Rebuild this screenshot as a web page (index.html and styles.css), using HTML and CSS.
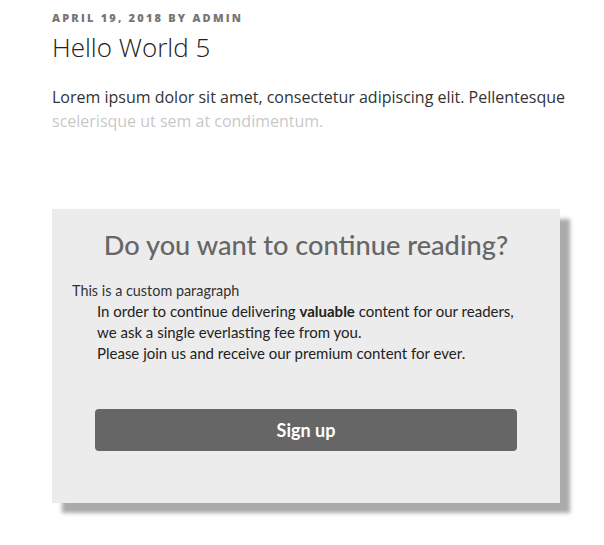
FILE: index.html
```html
<!DOCTYPE html>
<html>
<head>
<meta charset="utf-8">
<link rel="stylesheet" href="styles.css">
</head>
<body>
<main class="post">
  <div class="meta">April 19, 2018 by admin</div>
  <h1 class="title">Hello World 5</h1>
  <div class="excerpt">
    <p>Lorem ipsum dolor sit amet, consectetur adipiscing elit. Pellentesque scelerisque ut sem at condimentum.</p>
  </div>
  <section class="paywall">
    <h2 class="paywall-title">Do you want to continue reading?</h2>
    <div class="paywall-text">
      <p class="lead">This is a custom paragraph</p>
      <p class="indent">In order to continue delivering <strong>valuable</strong> content for our readers,<br>we ask a single everlasting fee from you.<br>Please join us and receive our premium content for ever.</p>
    </div>
    <div class="actions">
      <a class="btn">Sign up</a>
    </div>
  </section>
</main>
</body>
</html>
```
FILE: styles.css
```css
html, body {
  margin: 0;
  padding: 0;
  background: #fff;
}
.post {
  width: 508px;
  margin-left: 52px;
  padding-top: 10px;
  padding-bottom: 40px;
  font-family: "Open Sans", "Liberation Sans", sans-serif;
  color: #333;
}
.meta {
  font-size: 11px;
  font-weight: 800;
  letter-spacing: 0.2em;
  text-transform: uppercase;
  color: #767676;
  line-height: 14px;
  margin-top: 1px;
}
.title {
  margin: 5px 0 0;
  font-size: 26px;
  font-weight: 300;
  line-height: 34px;
  color: #222;
}
.excerpt {
  position: relative;
  margin-top: 21px;
  width: 530px;
}
.excerpt p {
  margin: 0;
  font-size: 16px;
  line-height: 24px;
  color: #333;
}
.excerpt::after {
  content: "";
  position: absolute;
  left: 0;
  right: 0;
  top: 24px;
  height: 24px;
  background: rgba(255, 255, 255, 0.72);
}
.paywall {
  margin-top: 76px;
  background: #ececec;
  box-shadow: 10px 10px 4px #aaa;
  padding: 20px 20px 52px;
  font-family: "Lato", "Liberation Sans", sans-serif;
}
.paywall-title {
  margin: 0;
  text-align: center;
  font-size: 27.2px;
  font-weight: 500;
  color: #666;
  line-height: 32px;
}
.paywall-text {
  margin-top: 19px;
  line-height: 21px;
  color: #333;
}
.paywall-text p {
  margin: 0;
}
.lead {
  font-size: 14.4px;
}
.indent {
  padding-left: 25px;
  font-size: 15px;
  color: #222;
}
.indent strong {
  font-weight: 700;
}
.actions {
  margin-top: 45px;
  display: flex;
  justify-content: center;
}
.btn {
  width: 422px;
  height: 42px;
  border-radius: 4px;
  background: #666;
  color: #fff;
  font-weight: 700;
  font-size: 18px;
  display: flex;
  align-items: center;
  justify-content: center;
}
```
